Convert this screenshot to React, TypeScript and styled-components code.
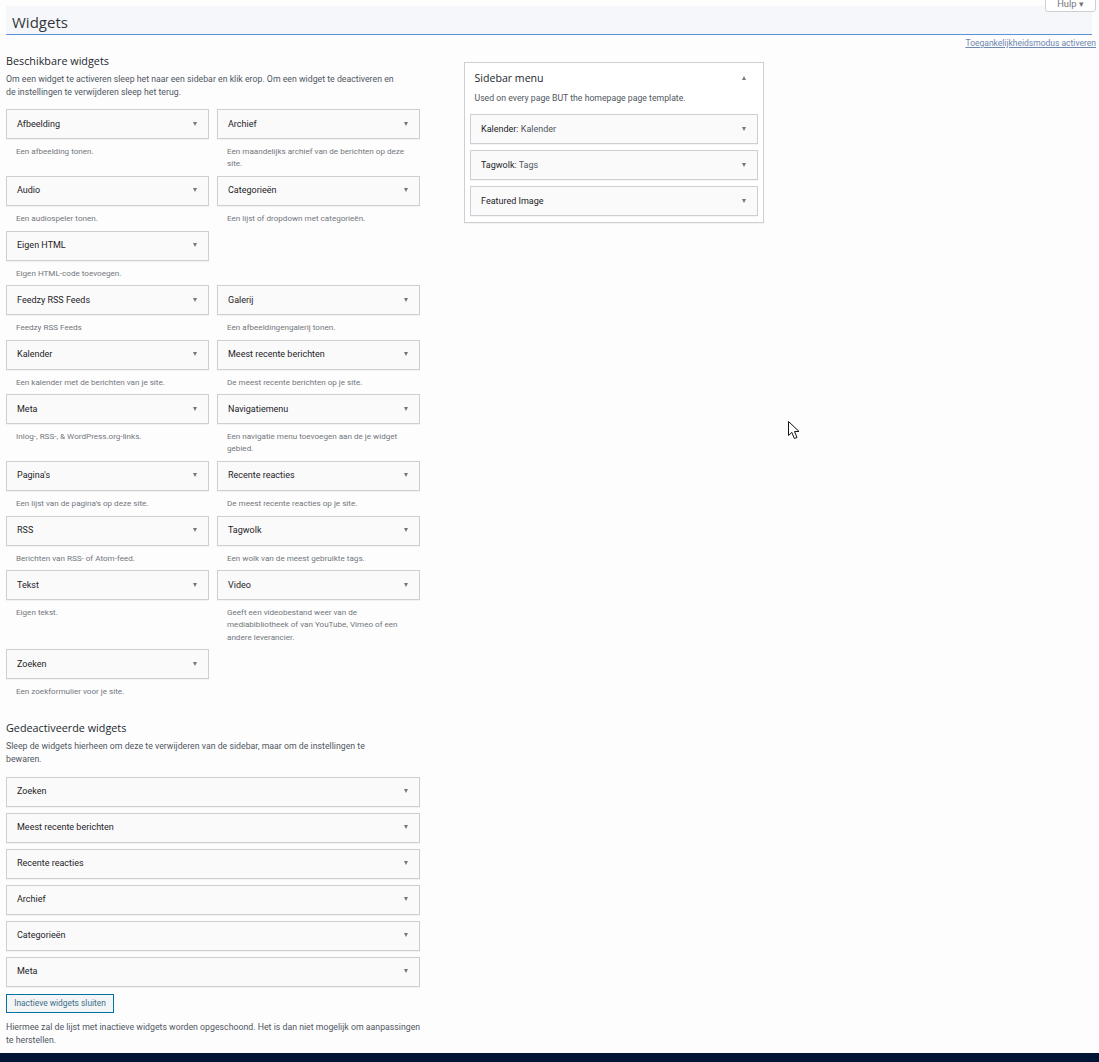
import React from 'react';
import styled, {createGlobalStyle} from 'styled-components';

const GlobalStyle = createGlobalStyle`
    html, body {
        margin: 0;
        padding: 0;
        background: #fdfdfe;
    }
    body {
        font-family: Roboto, 'Noto Sans', sans-serif;
        color: #444;
    }
`;

interface WidgetData {
    title: string;
    description: string;
    newRow?: boolean;
}

const AVAILABLE: WidgetData[] = [
    {title: 'Afbeelding', description: 'Een afbeelding tonen.'},
    {title: 'Archief', description: 'Een maandelijks archief van de berichten op deze site.'},
    {title: 'Audio', description: 'Een audiospeler tonen.'},
    {title: 'Categorieën', description: 'Een lijst of dropdown met categorieën.'},
    {title: 'Eigen HTML', description: 'Eigen HTML-code toevoegen.'},
    {title: 'Feedzy RSS Feeds', description: 'Feedzy RSS Feeds', newRow: true},
    {title: 'Galerij', description: 'Een afbeeldingengalerij tonen.'},
    {title: 'Kalender', description: 'Een kalender met de berichten van je site.'},
    {title: 'Meest recente berichten', description: 'De meest recente berichten op je site.'},
    {title: 'Meta', description: 'Inlog-, RSS-, & WordPress.org-links.'},
    {title: 'Navigatiemenu', description: 'Een navigatie menu toevoegen aan de je widget gebied.'},
    {title: "Pagina's", description: "Een lijst van de pagina's op deze site."},
    {title: 'Recente reacties', description: 'De meest recente reacties op je site.'},
    {title: 'RSS', description: 'Berichten van RSS- of Atom-feed.'},
    {title: 'Tagwolk', description: 'Een wolk van de meest gebruikte tags.'},
    {title: 'Tekst', description: 'Eigen tekst.'},
    {title: 'Video', description: 'Geeft een videobestand weer van de mediabibliotheek of van YouTube, Vimeo of een andere leverancier.'},
    {title: 'Zoeken', description: 'Een zoekformulier voor je site.'},
];

const INACTIVE = ['Zoeken', 'Meest recente berichten', 'Recente reacties', 'Archief', 'Categorieën', 'Meta'];

const Page = styled.div`
    position: relative;
    width: 1099px;
    height: 1062px;
    overflow: hidden;
    padding-top: 6px;
    box-sizing: border-box;
`;

const HelpTab = styled.button`
    position: absolute;
    top: -8px;
    right: 3px;
    width: 51px;
    height: 20px;
    padding: 3px 0 0;
    background: #fff;
    border: 1px solid #ccd0d4;
    border-radius: 0 0 3px 3px;
    font: 9.3px/14px Roboto, sans-serif;
    color: #72777c;
`;

const TitleBar = styled.h1`
    margin: 0 7px 0 6px;
    height: 29px;
    box-sizing: border-box;
    padding-left: 6px;
    background: #f6f7fb;
    border-bottom: 1px solid #5b93d6;
    font-family: 'Open Sans', sans-serif;
    font-size: 15px;
    font-weight: 400;
    line-height: 33px;
    color: #32373c;
`;

const ScreenMeta = styled.div`
    display: flex;
    justify-content: flex-end;
    height: 19px;
    padding-right: 3px;
`;

const AccessLink = styled.a`
    font-size: 8.5px;
    line-height: 17px;
    color: #6d87ad;
    text-decoration: underline;
`;

const Columns = styled.div`
    display: flex;
    align-items: flex-start;
    padding-left: 6px;
    gap: 44px;
`;

const LeftColumn = styled.div`
    width: 414px;
`;

const SectionTitle = styled.h2`
    margin: 0 0 5px;
    font-family: 'Open Sans', sans-serif;
    font-size: 10.8px;
    font-weight: 400;
    line-height: 14px;
    color: #23282d;
`;

const Hint = styled.p`
    margin: 0;
    max-width: 395px;
    font-size: 8.75px;
    line-height: 13px;
    color: #50575e;
`;

const WideHint = styled(Hint)`
    width: 420px;
    max-width: none;
`;

const AvailableGrid = styled.div`
    display: grid;
    grid-template-columns: 203px 203px;
    column-gap: 8px;
    margin-top: 10.1px;
`;

const GridItem = styled.div<{$newRow?: boolean}>`
    grid-column: ${p => (p.$newRow ? '1' : 'auto')};
`;

const WidgetBar = styled.div`
    display: flex;
    align-items: center;
    justify-content: space-between;
    height: 30px;
    box-sizing: border-box;
    padding: 0 11px 1px 10px;
    background: #fafafa;
    border: 1px solid #ccd0d4;
    box-shadow: 0 1px 1px rgba(0, 0, 0, 0.04);
`;

const WidgetName = styled.span`
    font-size: 9px;
    font-weight: 400;
    color: #1d2327;
    white-space: nowrap;
`;

const WidgetSub = styled.span`
    color: #50575e;
`;

const Caret = styled.span<{$up?: boolean}>`
    width: 0;
    height: 0;
    border-left: 2.75px solid transparent;
    border-right: 2.75px solid transparent;
    border-${p => (p.$up ? 'bottom' : 'top')}: 4px solid #72777c;
`;

const WidgetDesc = styled.div`
    padding: 6px 10px 6.2px;
    font-size: 8.1px;
    line-height: 12.35px;
    color: #72777c;
`;

const InactiveSection = styled.section`
    margin-top: 17.5px;
`;

const InactiveList = styled.div`
    display: flex;
    flex-direction: column;
    gap: 6px;
    margin-top: 10.5px;
`;

const CloseButton = styled.button`
    display: block;
    width: 108px;
    height: 19px;
    margin: 7px 0 8px;
    padding: 0;
    background: #f3f5f6;
    border: 1px solid #0071a1;
    font: 8.4px/17px Roboto, sans-serif;
    color: #3f6f8a;
`;

const SidebarPanel = styled.div`
    width: 300px;
    height: 161px;
    box-sizing: border-box;
    margin-top: 8px;
    padding: 0 5px;
    background: #fff;
    border: 1px solid #ccd0d4;
    box-shadow: 0 1px 1px rgba(0, 0, 0, 0.04);
`;

const SidebarHead = styled.div`
    display: flex;
    align-items: center;
    justify-content: space-between;
    height: 14px;
    padding: 8px 12px 1px 4.5px;
`;

const SidebarTitle = styled.h2`
    margin: 0;
    font-family: 'Open Sans', sans-serif;
    font-size: 10.6px;
    font-weight: 400;
    color: #23282d;
`;

const SidebarDesc = styled.div`
    margin-top: 6px;
    padding: 0 4.5px;
    height: 22px;
    font-size: 8.7px;
    line-height: 12px;
    color: #50575e;
`;

const SidebarWidgets = styled.div`
    display: flex;
    flex-direction: column;
    gap: 6px;
`;

const Footer = styled.div`
    position: absolute;
    left: 0;
    right: 0;
    bottom: 0;
    height: 9px;
    background: #001533;
`;

const Cursor = styled.svg`
    position: absolute;
    left: 787px;
    top: 420px;
`;

const Bar = ({name, sub}: {name: string; sub?: string}) => (
    <WidgetBar>
        <WidgetName>
            {name}
            {sub && <WidgetSub>{sub}</WidgetSub>}
        </WidgetName>
        <Caret/>
    </WidgetBar>
);

export default function App() {
    return (
        <Page>
            <GlobalStyle/>
            <HelpTab>{'Hulp ▾'}</HelpTab>
            <TitleBar>{'Widgets'}</TitleBar>
            <ScreenMeta>
                <AccessLink>{'Toegankelijkheidsmodus activeren'}</AccessLink>
            </ScreenMeta>
            <Columns>
                <LeftColumn>
                    <SectionTitle>{'Beschikbare widgets'}</SectionTitle>
                    <Hint>
                        {'Om een widget te activeren sleep het naar een sidebar en klik erop. Om een widget te deactiveren en de instellingen te verwijderen sleep het terug.'}
                    </Hint>
                    <AvailableGrid>
                        {AVAILABLE.map(w => (
                            <GridItem key={w.title} $newRow={w.newRow}>
                                <Bar name={w.title}/>
                                <WidgetDesc>{w.description}</WidgetDesc>
                            </GridItem>
                        ))}
                    </AvailableGrid>
                    <InactiveSection>
                        <SectionTitle>{'Gedeactiveerde widgets'}</SectionTitle>
                        <Hint>
                            {'Sleep de widgets hierheen om deze te verwijderen van de sidebar, maar om de instellingen te bewaren.'}
                        </Hint>
                        <InactiveList>
                            {INACTIVE.map(name => <Bar key={name} name={name}/>)}
                        </InactiveList>
                        <CloseButton>{'Inactieve widgets sluiten'}</CloseButton>
                        <WideHint>
                            {'Hiermee zal de lijst met inactieve widgets worden opgeschoond. Het is dan niet mogelijk om aanpassingen te herstellen.'}
                        </WideHint>
                    </InactiveSection>
                </LeftColumn>
                <SidebarPanel>
                    <SidebarHead>
                        <SidebarTitle>{'Sidebar menu'}</SidebarTitle>
                        <Caret $up={true}/>
                    </SidebarHead>
                    <SidebarDesc>{'Used on every page BUT the homepage page template.'}</SidebarDesc>
                    <SidebarWidgets>
                        <Bar name="Kalender:" sub=" Kalender"/>
                        <Bar name="Tagwolk:" sub=" Tags"/>
                        <Bar name="Featured Image"/>
                    </SidebarWidgets>
                </SidebarPanel>
            </Columns>
            <Footer/>
            <Cursor width="14" height="21" viewBox="0 0 14 21">
                <path
                    d="M1.5 1.5 L1.5 15.5 L4.8 12.4 L7.4 18.5 L10 17.4 L7.5 11.6 L12 11.4 Z"
                    fill="#fff"
                    stroke="#111"
                    strokeWidth="1"
                />
            </Cursor>
        </Page>
    );
}
